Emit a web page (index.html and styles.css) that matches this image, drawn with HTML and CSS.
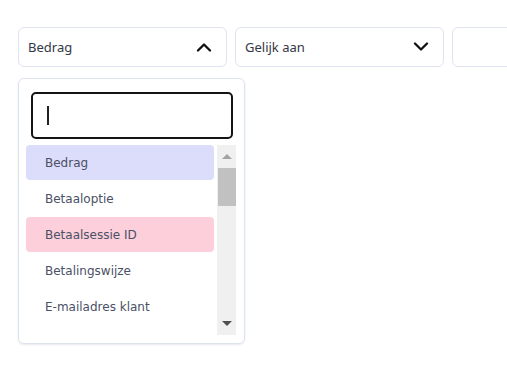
FILE: index.html
```html
<!DOCTYPE html>
<html lang="nl">
<head>
<meta charset="utf-8">
<title>Filter</title>
<link rel="stylesheet" href="styles.css">
</head>
<body>
<div class="filters">
  <div class="select">
    <span class="select-label">Bedrag</span>
    <svg class="chevron" viewBox="0 0 16 10" width="16" height="10"><path d="M2 8.5 L8 2.5 L14 8.5" fill="none" stroke="#111" stroke-width="2.3" stroke-linecap="round" stroke-linejoin="round"/></svg>
  </div>
  <div class="select">
    <span class="select-label">Gelijk aan</span>
    <svg class="chevron" viewBox="0 0 16 10" width="16" height="10"><path d="M2 1.5 L8 7.5 L14 1.5" fill="none" stroke="#111" stroke-width="2.3" stroke-linecap="round" stroke-linejoin="round"/></svg>
  </div>
  <div class="select"></div>
</div>
<div class="panel">
  <div class="search"><span class="caret"></span></div>
  <div class="list">
    <div class="options">
      <div class="option opt-active">Bedrag</div>
      <div class="option">Betaaloptie</div>
      <div class="option opt-hover">Betaalsessie ID</div>
      <div class="option">Betalingswijze</div>
      <div class="option">E-mailadres klant</div>
    </div>
    <div class="scrollbar">
      <span class="arrow-up"></span>
      <span class="thumb"></span>
      <span class="track-fill"></span>
      <span class="arrow-down"></span>
    </div>
  </div>
</div>
</body>
</html>
```
FILE: styles.css
```css
html, body {
  margin: 0;
  padding: 0;
  overflow: hidden;
  background: #ffffff;
}
body {
  font-family: "Noto Sans", "Open Sans", sans-serif;
  width: 507px;
  height: 366px;
}
.filters {
  display: flex;
  gap: 8px;
  padding: 27px 0 0 18px;
  overflow: hidden;
}
.select {
  flex: 0 0 auto;
  box-sizing: border-box;
  width: 209px;
  height: 40px;
  border: 1px solid #dfe3ef;
  border-radius: 6px;
  display: flex;
  align-items: center;
  justify-content: space-between;
  padding: 0 14px 0 9px;
}
.select-label {
  font-size: 13px;
  color: #333846;
  line-height: 1;
}
.chevron {
  display: block;
}
.panel {
  box-sizing: border-box;
  width: 227px;
  margin: 11px 0 0 18px;
  border: 1px solid #dde2ef;
  border-radius: 6px;
  box-shadow: 0 1px 2px rgba(120, 130, 160, 0.18);
  padding: 13px 8px 8px 7px;
}
.search {
  box-sizing: border-box;
  height: 47px;
  margin: 0 3px 6px 5px;
  border: 2px solid #141414;
  border-radius: 5px;
  display: flex;
  align-items: center;
  padding-left: 14px;
}
.caret {
  display: block;
  width: 2px;
  height: 19px;
  background: #222;
}
.list {
  display: flex;
  gap: 3px;
  height: 190px;
  overflow: hidden;
}
.options {
  flex: 1;
  display: flex;
  flex-direction: column;
  gap: 1px;
}
.option {
  flex: 0 0 auto;
  height: 35px;
  border-radius: 4px;
  display: flex;
  align-items: center;
  padding-left: 19px;
  font-family: "DejaVu Sans", "Verdana", sans-serif;
  font-size: 12px;
  color: #4a5066;
}
.opt-active {
  background: #dcdcfb;
}
.opt-hover {
  background: #fccfdb;
}
.scrollbar {
  flex: 0 0 19px;
  background: #f0f0f0;
  display: flex;
  flex-direction: column;
  align-items: center;
}
.arrow-up {
  margin-top: 9px;
  width: 0;
  height: 0;
  border-left: 5px solid transparent;
  border-right: 5px solid transparent;
  border-bottom: 5px solid #a3a3a3;
}
.thumb {
  margin-top: 9px;
  width: 18px;
  height: 38px;
  background: #c1c1c1;
}
.track-fill {
  flex: 1;
}
.arrow-down {
  margin-bottom: 9px;
  width: 0;
  height: 0;
  border-left: 5px solid transparent;
  border-right: 5px solid transparent;
  border-top: 5px solid #505050;
}
```
